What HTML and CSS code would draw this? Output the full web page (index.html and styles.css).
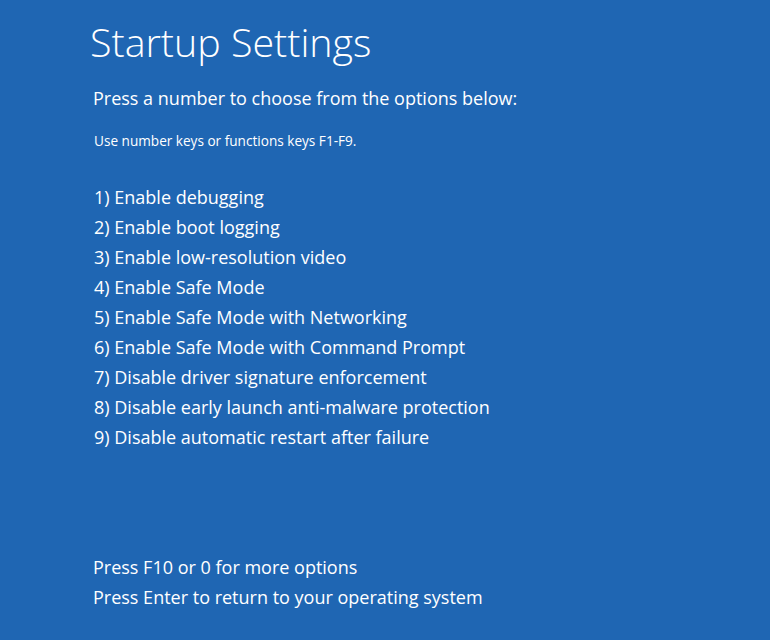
FILE: index.html
```html
<!DOCTYPE html>
<html>
<head>
<meta charset="utf-8">
<link rel="stylesheet" href="styles.css">
</head>
<body>
<main class="screen">
  <h1 class="title">Startup Settings</h1>
  <p class="lead">Press a number to choose from the options below:</p>
  <p class="hint">Use number keys or functions keys F1-F9.</p>
  <ul class="options">
    <li>1) Enable debugging</li>
    <li>2) Enable boot logging</li>
    <li>3) Enable low-resolution video</li>
    <li>4) Enable Safe Mode</li>
    <li>5) Enable Safe Mode with Networking</li>
    <li>6) Enable Safe Mode with Command Prompt</li>
    <li>7) Disable driver signature enforcement</li>
    <li>8) Disable early launch anti-malware protection</li>
    <li>9) Disable automatic restart after failure</li>
  </ul>
  <ul class="footer">
    <li>Press F10 or 0 for more options</li>
    <li>Press Enter to return to your operating system</li>
  </ul>
</main>
</body>
</html>
```
FILE: styles.css
```css
html, body {
  margin: 0;
  padding: 0;
  background: #1f66b3;
}
.screen {
  width: 770px;
  height: 640px;
  box-sizing: border-box;
  padding: 18px 0 0 93px;
  display: flex;
  flex-direction: column;
  color: #ffffff;
  font-family: "Open Sans", "Noto Sans", sans-serif;
}
.title {
  margin: 0 0 0 -3px;
  font-weight: 300;
  font-size: 39.4px;
  line-height: 48px;
}
.lead {
  margin: 20px 0 0 0;
  font-size: 18px;
  font-weight: 400;
  line-height: 24px;
}
.hint {
  margin: 22px 0 0 1px;
  font-size: 13.6px;
  line-height: 18px;
}
.options {
  list-style: none;
  margin: 32px 0 0 1px;
  padding: 0;
  font-size: 18px;
  line-height: 30px;
}
.footer {
  list-style: none;
  margin: auto 0 28px 0;
  padding: 0;
  font-size: 18px;
  line-height: 30px;
}
```
